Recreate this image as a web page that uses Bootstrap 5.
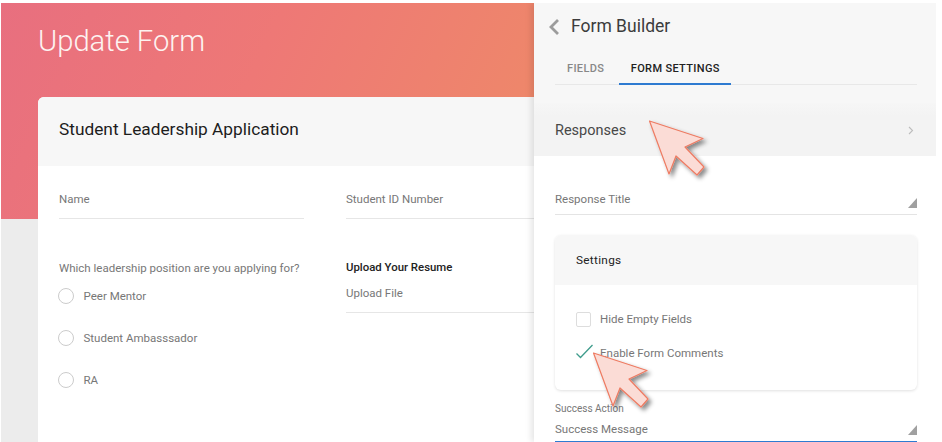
<!DOCTYPE html>
<html lang="en">
<head>
<meta charset="utf-8">
<title>Update Form</title>
<link href="https://cdn.jsdelivr.net/npm/bootstrap@5.3.0/dist/css/bootstrap.min.css" rel="stylesheet">
<style>
html,body{height:100%;overflow:hidden;background:#fff}
body{font-family:Roboto,"Liberation Sans",sans-serif;font-size:11.5px;color:#777}
.stage{margin:3px 0 0 1px;width:935px;height:439px;background:#ececec;position:relative;overflow:hidden}
.left-pane{width:533px;flex:0 0 533px;overflow:hidden}
.hero{height:216px;background:linear-gradient(115deg,#e86f7f 0%,#ee7876 45%,#ee8a68 100%)}
.hero-title{font-size:29.200px;font-weight:300;color:#fdf3f1;line-height:36px;padding:20px 0 0 37px;margin:0}
.form-sheet{width:640px;margin:-122px 0 0 37px;height:345px;background:#fff;border-radius:6px 6px 0 0}
.sheet-head{height:69px;background:#f7f7f7;padding:0 0 4px 21px;border-radius:6px 6px 0 0;font-size:17.300px;color:#1d1d1d}
.sheet-body{padding:0 21px;display:grid;grid-template-columns:245px 245px;column-gap:42px}
.text-field{height:53px;border-bottom:1px solid #e6e6e6;padding-top:25px;line-height:16px}
.left-col{padding-top:41px}
.q-label{line-height:16px;white-space:nowrap}
.radio-row{height:42px;gap:10px}
.radio-dot{width:16px;height:16px;border:1px solid #ccc;border-radius:50%;flex:none;margin:-2px 0 0 -1.500px}
.upload-title{margin-top:41px;line-height:14px;font-weight:500;font-size:11.400px;color:#222}
.upload-field{height:39px;border-bottom:1px solid #e6e6e6;padding-top:11px;line-height:16px}
.side-panel{width:402px;flex:0 0 402px;background:#fff;position:relative;z-index:1;box-shadow:-3px 0 6px rgba(0,0,0,.1)}
.panel-top{height:100px;background:#f7f7f7;padding:0 19px 0 21px}
.panel-title{height:47px;gap:12px;font-size:17.500px;color:#3c3c3c;margin-left:-6px}
.tab-strip{border-bottom:1px solid #e8e8e8;height:35px}
.tab-item{display:block;padding:11px 12px 0;height:35px;font-size:11px;font-weight:500;line-height:16px;color:#888;letter-spacing:.35px;text-decoration:none}
.tab-on{color:#222;border-bottom:2px solid #2e7bd1;width:112px;text-align:center;margin-left:3px;padding-left:0;padding-right:0}
.resp-row{height:53px;background:linear-gradient(#f6f6f6,#f3f3f3 25%);padding:2px 22px 0 21px;font-size:14.500px;color:#484848}
.panel-body{padding:0 19px 0 21px}
.select-field{position:relative;border-bottom:1px solid #e4e4e4;height:59px;padding-top:35px;line-height:16px}
.corner{position:absolute;right:0;bottom:6px;width:9px;height:10px;background:#a0a0a0;clip-path:polygon(100% 0,100% 100%,0 100%)}
.settings-box{margin-top:20px;height:155px;border-radius:6px;background:#fff;box-shadow:0 1px 3px rgba(0,0,0,.12)}
.settings-head{height:50px;background:#f7f7f7;border-radius:6px 6px 0 0;padding:2px 0 0 21px;color:#222;letter-spacing:.3px;font-size:11.800px}
.settings-body{padding:18px 21px 0}
.check-row{height:34px;gap:9px}
.box-mark{width:15px;height:15px;border:1px solid #ddd;border-radius:2px;flex:none;margin-top:-1px}
.check-mark{width:17px;height:15px;margin-right:-2px;margin-bottom:5px;flex:none}
.tiny-label{font-size:10px;line-height:12px;margin-top:13px;color:#777}
.success-field{position:relative;border-bottom:2px solid #2e7bd1;height:28px;padding-top:6px;line-height:16px}
.pointer{position:absolute;width:70px;height:70px;z-index:2;overflow:visible}
.pointer-a{left:640px;top:110px}
.pointer-b{left:584px;top:342px}
</style>
</head>
<body>
<div class="stage d-flex">
  <div class="left-pane">
    <div class="hero"><h1 class="hero-title">Update Form</h1></div>
    <div class="form-sheet">
      <div class="sheet-head d-flex align-items-center">Student Leadership Application</div>
      <div class="sheet-body">
        <div class="text-field">Name</div>
        <div class="text-field">Student ID Number</div>
        <div class="left-col">
          <div class="q-label">Which leadership position are you applying for?</div>
          <div class="radio-row d-flex align-items-center"><span class="radio-dot"></span><span>Peer Mentor</span></div>
          <div class="radio-row d-flex align-items-center"><span class="radio-dot"></span><span>Student Ambasssador</span></div>
          <div class="radio-row d-flex align-items-center"><span class="radio-dot"></span><span>RA</span></div>
        </div>
        <div>
          <div class="upload-title">Upload Your Resume</div>
          <div class="upload-field">Upload File</div>
        </div>
      </div>
    </div>
  </div>
  <div class="side-panel">
    <div class="panel-top">
      <div class="panel-title d-flex align-items-center">
        <svg width="10" height="16" viewBox="0 0 10 16"><path d="M9 1 2 8l7 7" fill="none" stroke="#9c9c9c" stroke-width="2.800"/></svg>
        <span>Form Builder</span>
      </div>
      <nav class="tab-strip nav">
        <a class="tab-item" href="#">FIELDS</a>
        <a class="tab-item tab-on" href="#">FORM SETTINGS</a>
      </nav>
    </div>
    <div class="resp-row d-flex align-items-center justify-content-between">
      <span>Responses</span>
      <svg width="6" height="9" viewBox="0 0 6 9"><path d="M1 1l3.500 3.500L1 8" fill="none" stroke="#bdbdbd" stroke-width="1.100"/></svg>
    </div>
    <div class="panel-body">
      <div class="select-field">Response Title<span class="corner"></span></div>
      <div class="settings-box">
        <div class="settings-head d-flex align-items-center">Settings</div>
        <div class="settings-body">
          <div class="check-row d-flex align-items-center"><span class="box-mark"></span><span>Hide Empty Fields</span></div>
          <div class="check-row d-flex align-items-center">
            <svg class="check-mark" viewBox="0 0 17 15"><path d="M.5 9.500 4.500 13.500 16.500 1" fill="none" stroke="#3f9c8c" stroke-width="1.300"/></svg>
            <span>Enable Form Comments</span></div>
        </div>
      </div>
      <div class="tiny-label">Success Action</div>
      <div class="success-field">Success Message<span class="corner"></span></div>
    </div>
  </div>
  <svg class="pointer pointer-a" viewBox="0 0 70 70"><defs><filter id="ps" x="-30%" y="-30%" width="170%" height="170%"><feDropShadow dx="3" dy="3" stdDeviation="2" flood-color="#000" flood-opacity=".45"/></filter></defs><path d="M8.500 8 62 25.500 44 34 63 54 56 62 35 43 28 61Z" fill="#fbdcd6" stroke="#ee7b62" stroke-width="1.200" stroke-linejoin="round" filter="url(#ps)"/></svg>
  <svg class="pointer pointer-b" viewBox="0 0 70 70"><path d="M8.500 8 62 25.500 44 34 63 54 56 62 35 43 28 61Z" fill="#fbdcd6" stroke="#ee7b62" stroke-width="1.200" stroke-linejoin="round" filter="url(#ps)"/></svg>
</div>
<script src="https://cdn.jsdelivr.net/npm/bootstrap@5.3.0/dist/js/bootstrap.bundle.min.js"></script>
</body>
</html>
